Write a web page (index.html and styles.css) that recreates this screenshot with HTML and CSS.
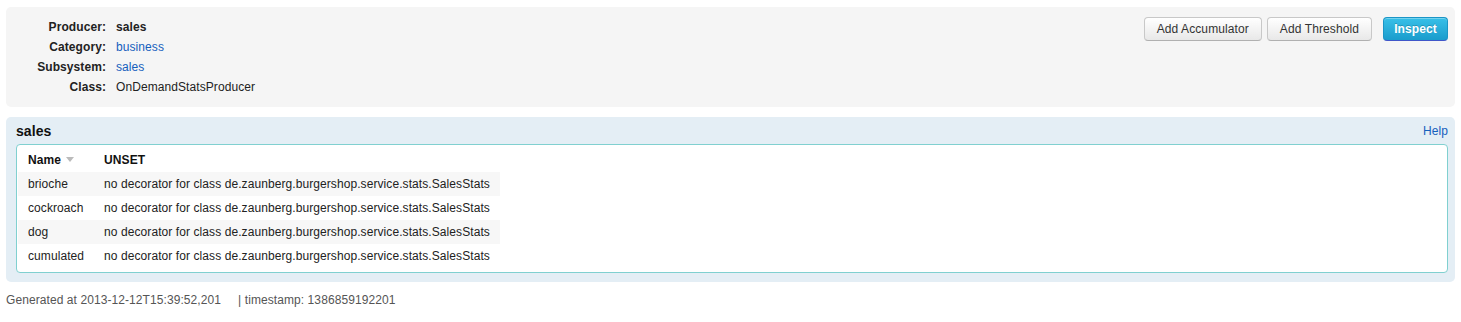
FILE: index.html
```html
<!DOCTYPE html>
<html lang="en">
<head>
    <meta charset="UTF-8">
    <title>Producer sales</title>
    <link rel="stylesheet" href="styles.css">
</head>
<body>
    <div class="page">
        <div class="info">
            <dl class="props">
                <dt>Producer:</dt><dd><strong>sales</strong></dd>
                <dt>Category:</dt><dd><a href="#">business</a></dd>
                <dt>Subsystem:</dt><dd><a href="#">sales</a></dd>
                <dt>Class:</dt><dd>OnDemandStatsProducer</dd>
            </dl>
            <div class="actions">
                <button type="button" class="btn">Add Accumulator</button>
                <button type="button" class="btn">Add Threshold</button>
                <button type="button" class="btn btn-info">Inspect</button>
            </div>
        </div>

        <div class="box">
            <div class="box-head">
                <h2>sales</h2>
                <a href="#" class="help">Help</a>
            </div>
            <div class="box-body">
                <table class="stats">
                    <thead>
                        <tr>
                            <th>Name <span class="sort"></span></th>
                            <th>UNSET</th>
                        </tr>
                    </thead>
                    <tbody>
                        <tr><td>brioche</td><td>no decorator for class de.zaunberg.burgershop.service.stats.SalesStats</td></tr>
                        <tr><td>cockroach</td><td>no decorator for class de.zaunberg.burgershop.service.stats.SalesStats</td></tr>
                        <tr><td>dog</td><td>no decorator for class de.zaunberg.burgershop.service.stats.SalesStats</td></tr>
                        <tr><td>cumulated</td><td>no decorator for class de.zaunberg.burgershop.service.stats.SalesStats</td></tr>
                    </tbody>
                </table>
            </div>
        </div>

        <div class="footer">Generated at 2013-12-12T15:39:52,201 &nbsp;&nbsp;&nbsp; | timestamp: 1386859192201</div>
    </div>
</body>
</html>
```

FILE: styles.css
```css
body {
    margin: 0;
    background: #fff;
    font-family: "Liberation Sans", Arial, sans-serif;
    font-size: 12px;
    line-height: 20px;
    letter-spacing: 0.08px;
    color: #222;
}

.page {
    padding: 7px 6px;
}

a {
    color: #1560bd;
    text-decoration: none;
}

/* producer info */
.info {
    display: flex;
    justify-content: space-between;
    align-items: flex-start;
    background: #f5f5f5;
    border-radius: 5px;
    padding: 10px 7px 10px 10px;
}
.props {
    display: grid;
    grid-template-columns: 90px auto;
    column-gap: 10px;
    margin: 0;
}
.props dt {
    font-weight: bold;
    text-align: right;
}
.props dd {
    margin: 0;
}

.actions {
    display: flex;
    gap: 5px;
}
.btn {
    font-family: "Liberation Sans", Arial, sans-serif;
    font-size: 12px;
    letter-spacing: 0.1px;
    line-height: 16px;
    height: 24px;
    padding: 3px 12px;
    color: #333;
    background: linear-gradient(#ffffff, #e8e8e8);
    border: 1px solid #c8c8c8;
    border-bottom-color: #b0b0b0;
    border-radius: 4px;
    box-shadow: inset 0 1px 0 rgba(255,255,255,.3);
}
.btn-info {
    margin-left: 6px;
    width: 65px;
    padding: 3px 0;
    color: #fff;
    font-weight: bold;
    text-shadow: 0 -1px 0 rgba(0,0,0,.2);
    background: linear-gradient(#38c0e8, #1a9ccc);
    border-color: #1b95c6;
    border-bottom-color: #3f56c9;
}

/* stats box */
.box {
    margin-top: 10px;
    background: #e4eef5;
    border-radius: 5px;
    padding: 0 7px 9px 10px;
}
.box-head {
    display: flex;
    justify-content: space-between;
    align-items: center;
    height: 27px;
}
.box-head h2 {
    margin: 0;
    font-size: 14px;
    font-weight: bold;
    color: #111;
}
.help {
    margin-top: 1px;
}
.box-body {
    background: #fff;
    border: 1px solid #80d0d0;
    border-radius: 4px;
    padding: 3px 1px 4px;
}

.stats {
    border-collapse: collapse;
}
.stats th,
.stats td {
    text-align: left;
    padding: 5px 10px 5px 10px;
    line-height: 14px;
    white-space: nowrap;
}
.stats th {
    font-weight: bold;
    color: #111;
}
.stats tbody tr:nth-child(odd) {
    background: #f7f7f7;
}
.sort {
    display: inline-block;
    width: 0;
    height: 0;
    margin-left: 2px;
    border-left: 4px solid transparent;
    border-right: 4px solid transparent;
    border-top: 5px solid #bbb;
    vertical-align: 2px;
}

.footer {
    margin-top: 8px;
    color: #555;
}
```
